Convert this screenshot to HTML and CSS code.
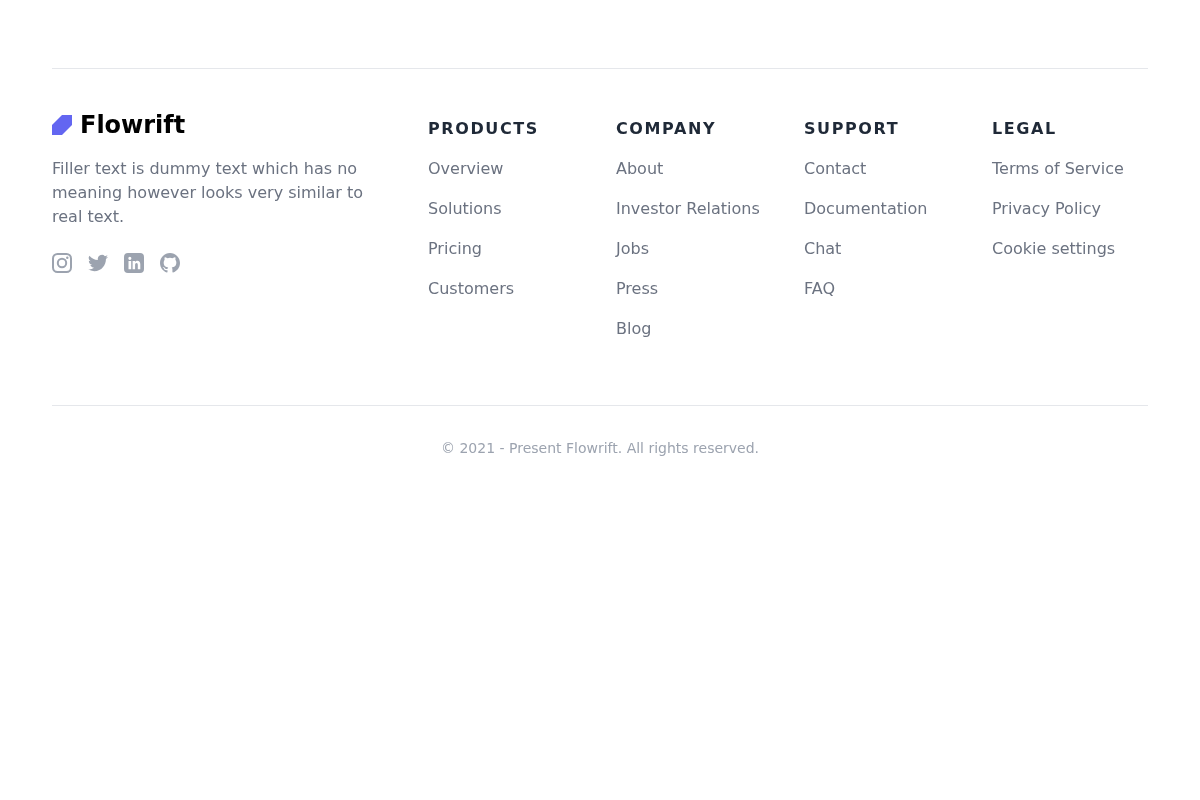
FILE: index.html
```html
<!DOCTYPE html>
<html lang="en">
<head>
    <meta charset="UTF-8">
    <meta name="viewport" content="width=device-width, initial-scale=1.0">
    <title>Flowrift footer</title>
    <link rel="stylesheet" href="styles.css">
</head>
<body>
    <footer class="footer">
        <div class="footer-main">
            <div class="brand">
                <a class="logo" href="#">
                    <svg class="logo-mark" width="20" height="20" viewBox="0 0 20 20" aria-hidden="true">
                        <polygon points="10,0 20,0 20,10 10,20 0,20 0,10" fill="#6366f1"/>
                    </svg>
                    <span>Flowrift</span>
                </a>
                <p class="brand-text">Filler text is dummy text which has no meaning however looks very similar to real text.</p>
                <div class="social">
                    <a href="#" aria-label="Instagram">
                        <svg width="20" height="20" viewBox="0 0 20 20" aria-hidden="true">
                            <rect x="1" y="1" width="18" height="18" rx="4.500" fill="none" stroke="currentColor" stroke-width="2"/>
                            <circle cx="10" cy="10" r="4.200" fill="none" stroke="currentColor" stroke-width="2"/>
                            <circle cx="15.300" cy="4.700" r="1.200" fill="currentColor"/>
                        </svg>
                    </a>
                    <a href="#" aria-label="Twitter">
                        <svg width="20" height="20" viewBox="0 0 24 24" aria-hidden="true">
                            <path fill="currentColor" d="M24 4.6a9.8 9.8 0 0 1-2.8.8 4.9 4.9 0 0 0 2.2-2.7 9.9 9.9 0 0 1-3.1 1.2 4.9 4.9 0 0 0-8.4 4.5A14 14 0 0 1 1.7 3.2a4.9 4.9 0 0 0 1.5 6.6 4.9 4.9 0 0 1-2.2-.6v.1a4.9 4.9 0 0 0 3.9 4.8 4.9 4.9 0 0 1-2.2.1 4.9 4.9 0 0 0 4.6 3.4A9.9 9.9 0 0 1 0 19.6 14 14 0 0 0 7.5 21.8c9.1 0 14-7.5 14-14v-.6A10 10 0 0 0 24 4.6z"/>
                        </svg>
                    </a>
                    <a href="#" aria-label="LinkedIn">
                        <svg width="20" height="20" viewBox="0 0 20 20" aria-hidden="true">
                            <path fill="currentColor" fill-rule="evenodd" d="M4 0h12a4 4 0 0 1 4 4v12a4 4 0 0 1-4 4H4a4 4 0 0 1-4-4V4a4 4 0 0 1 4-4zM4.500 8v8.300h2.700V8zM5.850 3.800a1.550 1.550 0 1 0 0 3.100 1.550 1.550 0 0 0 0-3.100zM8.600 8v8.300h2.500v-4.300c0-1.200.5-2 1.400-2s1.300.8 1.300 2v4.300h2.500v-5c0-2.200-1.100-3.500-2.900-3.500-1.100 0-1.900.6-2.300 1.400V8z"/>
                        </svg>
                    </a>
                    <a href="#" aria-label="GitHub">
                        <svg width="20" height="20" viewBox="0 0 24 24" aria-hidden="true">
                            <path fill="currentColor" d="M12 0C5.400 0 0 5.400 0 12c0 5.300 3.400 9.800 8.200 11.400.6.100.8-.3.8-.6v-2.200c-3.300.7-4-1.400-4-1.400-.5-1.400-1.300-1.800-1.300-1.800-1.100-.7.1-.7.1-.7 1.200.1 1.800 1.200 1.800 1.200 1.100 1.800 2.800 1.300 3.500 1 .1-.8.4-1.300.8-1.600-2.700-.3-5.500-1.300-5.500-5.900 0-1.300.5-2.400 1.200-3.200-.1-.3-.5-1.500.1-3.200 0 0 1-.3 3.300 1.200a11.500 11.500 0 0 1 6 0c2.300-1.500 3.300-1.200 3.300-1.200.6 1.700.2 2.900.1 3.200.8.800 1.200 1.900 1.200 3.200 0 4.600-2.800 5.600-5.500 5.900.4.400.8 1.100.8 2.200v3.300c0 .3.200.7.800.6C20.600 21.800 24 17.300 24 12c0-6.600-5.400-12-12-12z"/>
                        </svg>
                    </a>
                </div>
            </div>

            <nav class="link-col">
                <h3>Products</h3>
                <a href="#">Overview</a>
                <a href="#">Solutions</a>
                <a href="#">Pricing</a>
                <a href="#">Customers</a>
            </nav>
            <nav class="link-col">
                <h3>Company</h3>
                <a href="#">About</a>
                <a href="#">Investor Relations</a>
                <a href="#">Jobs</a>
                <a href="#">Press</a>
                <a href="#">Blog</a>
            </nav>
            <nav class="link-col">
                <h3>Support</h3>
                <a href="#">Contact</a>
                <a href="#">Documentation</a>
                <a href="#">Chat</a>
                <a href="#">FAQ</a>
            </nav>
            <nav class="link-col">
                <h3>Legal</h3>
                <a href="#">Terms of Service</a>
                <a href="#">Privacy Policy</a>
                <a href="#">Cookie settings</a>
            </nav>
        </div>
        <div class="copyright">© 2021 - Present Flowrift. All rights reserved.</div>
    </footer>
</body>
</html>
```

FILE: styles.css
```css
body {
    font-family: "DejaVu Sans", sans-serif;
    margin: 0;
}

a {
    text-decoration: none;
}

.footer {
    margin: 68px 52px 0;
    border-top: 1px solid #e5e7eb;
    will-change: transform; /* own layer, text gets grayscale antialiasing */
}

.footer-main {
    display: grid;
    grid-template-columns: 376px repeat(4, 188px);
    padding-top: 40px;
    padding-bottom: 64px;
}

.logo {
    display: flex;
    align-items: center;
    gap: 8px;
    color: #000;
    font-size: 24px;
    font-weight: 700;
    line-height: 32px;
}

.logo-mark {
    flex: none;
}

.brand-text {
    margin: 16px 0 24px;
    width: 330px;
    color: #6b7280;
    font-size: 16px;
    line-height: 24px;
}

.social {
    display: flex;
    gap: 16px;
}

.social a {
    display: block;
    height: 24px;
    color: #9ca3af;
}

.link-col {
    display: flex;
    flex-direction: column;
    align-items: flex-start;
    gap: 16px;
    padding-top: 8px;
}

.link-col h3 {
    margin: 0;
    color: #1f2937;
    font-size: 16px;
    font-weight: 700;
    line-height: 24px;
    letter-spacing: 0.1em;
    text-transform: uppercase;
}

.link-col a {
    color: #6b7280;
    font-size: 16px;
    line-height: 24px;
}

.copyright {
    border-top: 1px solid #e5e7eb;
    padding: 32px 0;
    color: #9ca3af;
    font-size: 14px;
    line-height: 20px;
    text-align: center;
}
```
